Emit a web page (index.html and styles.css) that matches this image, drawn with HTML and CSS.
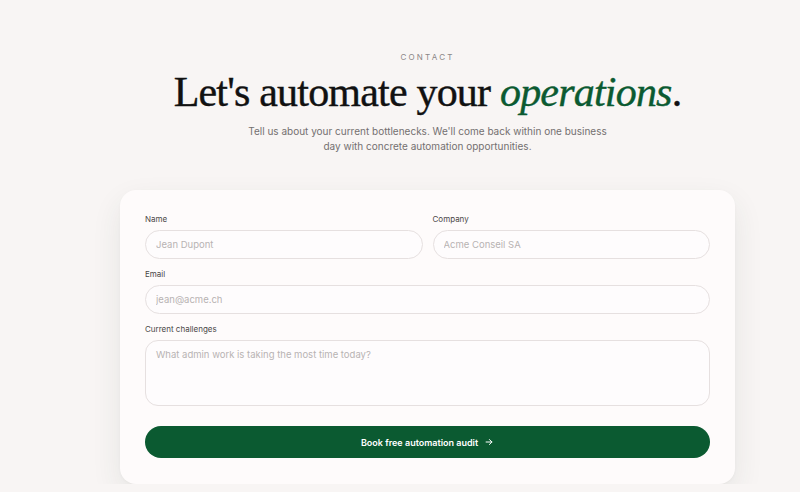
FILE: index.html
```html
<!DOCTYPE html>
<html lang="en">
  <head>
    <meta charset="UTF-8" />
    <meta name="viewport" content="width=device-width, initial-scale=1.0" />
    <title>Contact</title>
    <link rel="stylesheet" href="styles.css">
  </head>
  <body>
    <section class="contact">
      <p class="eyebrow">CONTACT</p>
      <h1>Let's automate your <em>operations</em>.</h1>
      <p class="lead">
        Tell us about your current bottlenecks. We'll come back within one business
        day with concrete automation opportunities.
      </p>

      <form class="card">
        <div class="row">
          <div class="field">
            <label for="name">Name</label>
            <input type="text" id="name" placeholder="Jean Dupont" />
          </div>
          <div class="field">
            <label for="company">Company</label>
            <input type="text" id="company" placeholder="Acme Conseil SA" />
          </div>
        </div>

        <div class="field">
          <label for="email">Email</label>
          <input type="email" id="email" placeholder="jean@acme.ch" />
        </div>

        <div class="field">
          <label for="challenges">Current challenges</label>
          <textarea id="challenges" placeholder="What admin work is taking the most time today?"></textarea>
        </div>

        <button type="submit">
          Book free automation audit
          <svg width="10" height="10" viewBox="0 0 24 24" fill="none" stroke="currentColor" stroke-width="2.4" stroke-linecap="round" stroke-linejoin="round">
            <path d="M5 12h14" />
            <path d="M13 6l6 6-6 6" />
          </svg>
        </button>
      </form>
    </section>
  </body>
</html>
```

FILE: styles.css
```css
body {
  margin: 0;
  background-color: #f8f5f4;
  font-family: Inter, "Noto Sans", sans-serif;
  color: #1a1a1a;
}
.contact {
  width: 615px;
  margin-left: 120px;
  padding-top: 52px;
  text-align: center;
}
.eyebrow {
  margin: 0;
  font-size: 8px;
  letter-spacing: 2.2px;
  color: #8a8686;
  line-height: 10px;
}
h1 {
  margin: 5px 0 0;
  font-family: "Liberation Serif", serif;
  font-weight: 400;
  font-size: 42px;
  line-height: 50px;
  letter-spacing: -0.8px;
  color: #111;
  -webkit-text-stroke: 0.4px #111;
}
h1 em {
  color: #0b5a31;
  -webkit-text-stroke: 0.4px #0b5a31;
}
.lead {
  width: 376px;
  margin: 7px auto 0;
  font-size: 10px;
  line-height: 15px;
  color: #747070;
}
.card {
  margin-top: 36px;
  padding: 24px 25px 26px;
  background-color: #fefbfb;
  border-radius: 16px;
  box-shadow: 0 12px 30px rgba(40, 70, 55, 0.09), 0 1px 3px rgba(0, 0, 0, 0.03);
  text-align: left;
}
.row {
  display: flex;
  gap: 10px;
}
.row .field {
  flex: 1;
}
.field {
  margin-bottom: 10px;
}
label {
  display: block;
  margin-bottom: 6px;
  font-size: 8px;
  line-height: 10px;
  color: #4a4747;
}
input,
textarea {
  display: block;
  width: 100%;
  box-sizing: border-box;
  border: 1px solid #e6e0e0;
  background-color: #fefcfd;
  font-family: Inter, "Noto Sans", sans-serif;
  font-size: 9.5px;
  color: #222;
}
input {
  height: 29px;
  padding: 0 10px;
  border-radius: 15px;
}
textarea {
  height: 66px;
  padding: 8px 10px;
  border-radius: 13px;
  resize: none;
}
input::placeholder,
textarea::placeholder {
  color: #b8b3b3;
}
button {
  display: flex;
  align-items: center;
  justify-content: center;
  gap: 6px;
  width: 100%;
  height: 32px;
  margin-top: 20px;
  border: none;
  border-radius: 16px;
  background-color: #0b5a31;
  color: #fff;
  font-family: Inter, "Noto Sans", sans-serif;
  font-size: 9px;
  font-weight: 600;
  cursor: pointer;
}
```
